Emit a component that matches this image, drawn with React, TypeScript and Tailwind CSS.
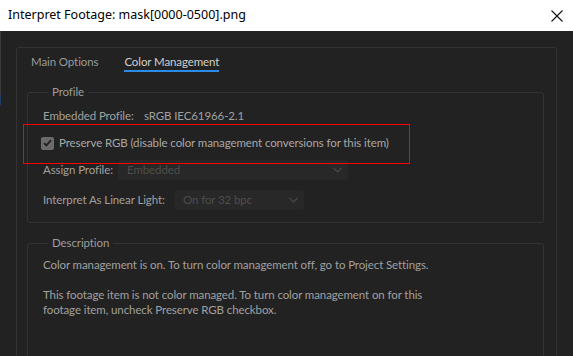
import React from "react";

const uiFont = { fontFamily: "Lato, 'Noto Sans', sans-serif", letterSpacing: "-0.1px" };

function Chevron() {
  return (
    <svg width="9" height="6" viewBox="0 0 9 6" fill="none" stroke="#4a4a4a" strokeWidth="1.2">
      <polyline points="0.5,0.8 4.5,4.8 8.5,0.8" />
    </svg>
  );
}

function Dropdown({ value, width }: { value: string; width: string }) {
  return (
    <div className={`${width} h-[20px] rounded-[3px] bg-[#282828] flex items-center justify-between pl-[9px] pr-[6px]`}>
      <span className="text-[11.5px] text-[#4e4e4e] leading-none">{value}</span>
      <Chevron />
    </div>
  );
}

export default function App() {
  return (
    <div className="w-[573px] h-[356px] overflow-hidden bg-[#222222] flex flex-col" style={uiFont}>
      {/* Title bar */}
      <div className="h-[31px] shrink-0 bg-white flex items-center justify-between pl-[8px] pr-[10px]">
        <span
          className="text-[12.5px] text-black"
          style={{ fontFamily: "'Segoe UI', 'Noto Sans', sans-serif", letterSpacing: "0px" }}
        >
          Interpret Footage: mask[0000-0500].png
        </span>
        <svg width="12" height="12" viewBox="0 0 12 12" stroke="#111" strokeWidth="1.1">
          <line x1="0.5" y1="0.5" x2="11.5" y2="11.5" />
          <line x1="11.5" y1="0.5" x2="0.5" y2="11.5" />
        </svg>
      </div>

      <div className="flex flex-1 min-h-0">
        {/* sliver of the window behind */}
        <div className="w-[1px] flex flex-col">
          <div className="h-[64px] bg-[#3a3a3a]" />
          <div className="h-[10px] bg-[#1c3d66]" />
        </div>

        <div className="flex-1 pl-[15px] pr-[16px] pt-[16px]">
          <div className="h-[400px] border border-[#333333] rounded-[3px] pl-[10px] pr-[12px]">
            {/* Tabs */}
            <div className="h-[24px] flex gap-[26px] pl-[4px] text-[11.5px]">
              <div className="pt-[6px] leading-[15px] text-[#9a9a9a]">Main Options</div>
              <div className="flex flex-col">
                <div className="pt-[6px] leading-[15px] text-[#cfcfcf]">Color Management</div>
                <div className="mt-[1px] h-[2px] bg-[#2b8be6]" />
              </div>
            </div>

            {/* Profile */}
            <fieldset className="relative mt-[12px] border border-[#333333] rounded-[3px] pl-[15px] pb-[12px]">
              <legend className="ml-[5px] px-[4px] text-[11.5px] leading-[16px] text-[#9c9c9c]">Profile</legend>
              <div className="mt-[8px] h-[16px] flex items-center text-[11.5px] text-[#a0a0a0] whitespace-nowrap">
                <span className="w-[101px] shrink-0">Embedded Profile:</span>
                <span>sRGB IEC61966-2.1</span>
              </div>
              <div className="mt-[9px] h-[20px] flex items-center gap-[5px] -ml-[2px]">
                <div className="w-[13px] h-[13px] rounded-[2px] bg-[#6b6b6b] flex items-center justify-center">
                  <svg width="9" height="8" viewBox="0 0 9 8" fill="none" stroke="#1f1f1f" strokeWidth="1.8">
                    <polyline points="1,4.2 3.4,6.4 8,1.2" />
                  </svg>
                </div>
                <span className="text-[11.5px] text-[#a8a8a8] whitespace-nowrap">
                  Preserve RGB (disable color management conversions for this item)
                </span>
              </div>
              <div className="mt-[7px] h-[20px] flex items-center text-[11.5px] text-[#a0a0a0] whitespace-nowrap">
                <span className="w-[75px] shrink-0">Assign Profile:</span>
                <Dropdown value="Embedded" width="w-[230px]" />
              </div>
              <div className="mt-[10px] h-[20px] flex items-center text-[11.5px] text-[#a0a0a0] whitespace-nowrap">
                <span className="w-[131px] shrink-0">Interpret As Linear Light:</span>
                <Dropdown value="On for 32 bpc" width="w-[130px]" />
              </div>
              {/* red annotation box */}
              <div className="absolute left-[-5px] top-[24px] w-[387px] h-[40px] border border-[#ff0000] pointer-events-none" />
            </fieldset>

            {/* Description */}
            <fieldset className="mt-[12px] border border-[#333333] rounded-[3px] pl-[15px] h-[200px]">
              <legend className="ml-[5px] px-[4px] text-[11.5px] leading-[16px] text-[#9c9c9c]">Description</legend>
              <div className="pt-[6px] text-[11.5px] leading-[15px] text-[#a0a0a0]">
                <p>Color management is on. To turn color management off, go to Project Settings.</p>
                <p className="mt-[15px]">
                  This footage item is not color managed. To turn color management on for this
                  <br />
                  footage item, uncheck Preserve RGB checkbox.
                </p>
              </div>
            </fieldset>
          </div>
        </div>
      </div>
    </div>
  );
}
